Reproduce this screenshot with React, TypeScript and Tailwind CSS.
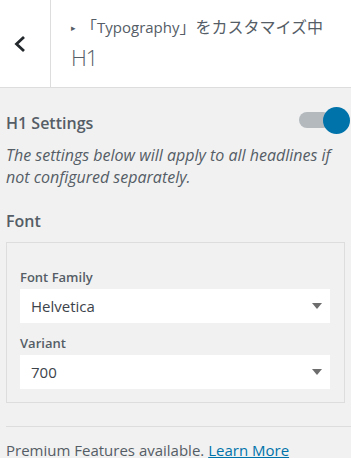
import React from "react";

function Select({ value }: { value: string }) {
  return (
    <div className="relative h-[34px] w-full bg-white flex items-center pl-[11px]">
      <span className="text-[15px] text-[#3c434a]">{value}</span>
      <svg className="absolute right-[7px] top-[13px]" width="12" height="8" viewBox="0 0 12 8">
        <path d="M1 1 H11 L6 7 Z" fill="#6d6d6d" />
      </svg>
    </div>
  );
}

export default function App() {
  return (
    <div
      className="w-[351px] h-[458px] overflow-hidden bg-[#f1f1f1] text-[#555d66]"
      style={{ fontFamily: '"Open Sans", "Noto Sans CJK JP", sans-serif' }}
    >
      <div className="flex h-[88px] bg-white border-b border-[#dddddd]">
        <div className="w-[51px] border-r border-[#dddddd] flex items-center pl-[13px]">
          <svg width="14" height="18" viewBox="0 0 14 18">
            <path d="M11 2 L3.5 9 L11 16" stroke="#23282d" strokeWidth="2.8" fill="none" />
          </svg>
        </div>
        <div className="flex-1 pl-[20px] pt-[15px]">
          <div className="text-[15px] leading-[24px] text-[#555d66] whitespace-nowrap">
            <span className="text-[9px] mr-[5px] align-[2px]">▸</span>
            <span className="text-[16px]">「</span>Typography<span className="text-[16px]">」をカスタマイズ中</span>
          </div>
          <div className="text-[22px] leading-[30px] font-light tracking-[-1px] text-[#555d66] mt-[2px]">H1</div>
        </div>
      </div>

      <div className="px-[6px]">
        <div className="flex items-center justify-between mt-[22px] h-[26px]">
          <div className="text-[16px] font-semibold">H1 Settings</div>
          <div className="relative w-[52px] h-[26px] -mr-[6px]">
            <div className="absolute left-[0px] top-[2px] w-[32px] h-[16px] rounded-full bg-[#b4b9be]" />
            <div className="absolute left-[24px] top-[-3px] w-[27px] h-[27px] rounded-full bg-[#0073aa]" />
          </div>
        </div>
        <p className="mt-[8px] text-[16px] leading-[22px] italic">
          The settings below will apply to all headlines if not configured separately.
        </p>
        <div className="mt-[21px] text-[16px] font-semibold leading-[24px]">Font</div>
        <div className="mt-[9px] border border-[#dddddd] pl-[13px] pr-[14px] pt-[24px] pb-[13px] flex flex-col">
          <label className="text-[13px] font-semibold leading-[20px] mb-[2px]">Font Family</label>
          <Select value="Helvetica" />
          <label className="text-[13px] font-semibold leading-[20px] mt-[10px] mb-[2px]">Variant</label>
          <Select value="700" />
        </div>
        <div className="mt-[23px] border-t border-[#dddddd] -mr-[6px]" />
        <div className="mt-[12px] text-[15px] leading-[22px] whitespace-nowrap">
          Premium Features available.{" "}
          <a className="text-[#0073aa] underline" href="#">Learn More</a>
        </div>
      </div>
    </div>
  );
}
